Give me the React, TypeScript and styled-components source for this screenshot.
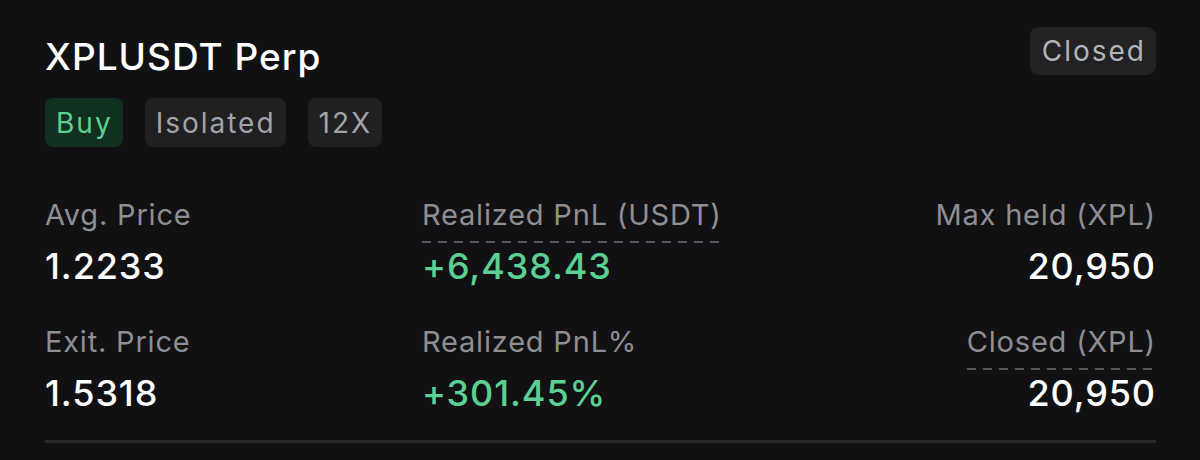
import styled, {createGlobalStyle} from 'styled-components';

const GlobalStyle = createGlobalStyle`
  html, body {
    margin: 0;
    padding: 0;
    background: #111114;
  }
  body {
    font-family: Inter, "Noto Sans", "Liberation Sans", sans-serif;
    -webkit-font-smoothing: antialiased;
  }
`;

const Card = styled.div`
  width: 1200px;
  height: 460px;
  box-sizing: border-box;
  padding: 27px 44px 0 45px;
  background: #111114;
  color: #fff;
`;

const Header = styled.div`
  display: flex;
  justify-content: space-between;
  align-items: flex-start;
`;

const TitleBlock = styled.div`
  display: flex;
  flex-direction: column;
  padding-top: 8px;
`;

const Title = styled.div`
  font-size: 37px;
  line-height: 44px;
  font-weight: 500;
  letter-spacing: 1px;
`;

const Tags = styled.div`
  display: flex;
  gap: 22px;
  margin-top: 19px;
`;

const Tag = styled.div<{$tone?: 'buy' | 'neutral'}>`
  display: flex;
  align-items: center;
  height: 49px;
  padding: 0 10px 0 11px;
  border-radius: 8px;
  font-size: 28px;
  letter-spacing: 2px;
  background: ${({$tone}) => ($tone === 'buy' ? '#12301f' : '#202023')};
  color: ${({$tone}) => ($tone === 'buy' ? '#5ccf93' : '#a3a3a7')};
`;

const StatusBadge = styled.div`
  display: flex;
  align-items: center;
  height: 48px;
  padding: 0 10px 0 12px;
  border-radius: 9px;
  font-size: 28px;
  letter-spacing: 2px;
  background: #222225;
  color: #b4b4b8;
`;

const Stats = styled.div`
  display: grid;
  grid-template-columns: 377px 1fr 1fr;
  row-gap: 36px;
  margin-top: 50px;
`;

const Stat = styled.div<{$align?: 'left' | 'right'}>`
  display: flex;
  flex-direction: column;
  align-items: ${({$align}) => ($align === 'right' ? 'flex-end' : 'flex-start')};
`;

const Label = styled.div<{$dashed?: boolean}>`
  display: inline-block;
  font-size: 29px;
  line-height: 35px;
  padding-bottom: 11px;
  color: #8e8e93;
  letter-spacing: 0.8px;
  background: ${({$dashed}) =>
    $dashed
      ? 'repeating-linear-gradient(to right, #58585c 0 9px, transparent 9px 16px) left bottom / 100% 2px no-repeat'
      : 'none'};
`;

const Value = styled.div<{$positive?: boolean}>`
  font-size: 36px;
  line-height: 44px;
  font-weight: 500;
  letter-spacing: 0.9px;
  margin-top: 1px;
  color: ${({$positive}) => ($positive ? '#5ccf93' : '#ffffff')};
`;

const Divider = styled.div`
  height: 3px;
  margin-top: 25px;
  background: #29292c;
`;

interface IStat {
  label: string;
  value: string;
  dashed?: boolean;
  positive?: boolean;
  align?: 'left' | 'right';
}

const stats: IStat[] = [
  {label: 'Avg. Price', value: '1.2233'},
  {label: 'Realized PnL (USDT)', value: '+6,438.43', dashed: true, positive: true},
  {label: 'Max held (XPL)', value: '20,950', align: 'right'},
  {label: 'Exit. Price', value: '1.5318'},
  {label: 'Realized PnL%', value: '+301.45%', positive: true},
  {label: 'Closed (XPL)', value: '20,950', dashed: true, align: 'right'}
];

function App(): JSX.Element {
  return (
    <>
      <GlobalStyle />
      <Card>
        <Header>
          <TitleBlock>
            <Title>XPLUSDT Perp</Title>
            <Tags>
              <Tag $tone="buy">Buy</Tag>
              <Tag>Isolated</Tag>
              <Tag>12X</Tag>
            </Tags>
          </TitleBlock>
          <StatusBadge>Closed</StatusBadge>
        </Header>
        <Stats>
          {stats.map((s) => (
            <Stat key={s.label} $align={s.align}>
              <Label $dashed={s.dashed}>{s.label}</Label>
              <Value $positive={s.positive}>{s.value}</Value>
            </Stat>
          ))}
        </Stats>
        <Divider />
      </Card>
    </>
  );
}

export default App;
